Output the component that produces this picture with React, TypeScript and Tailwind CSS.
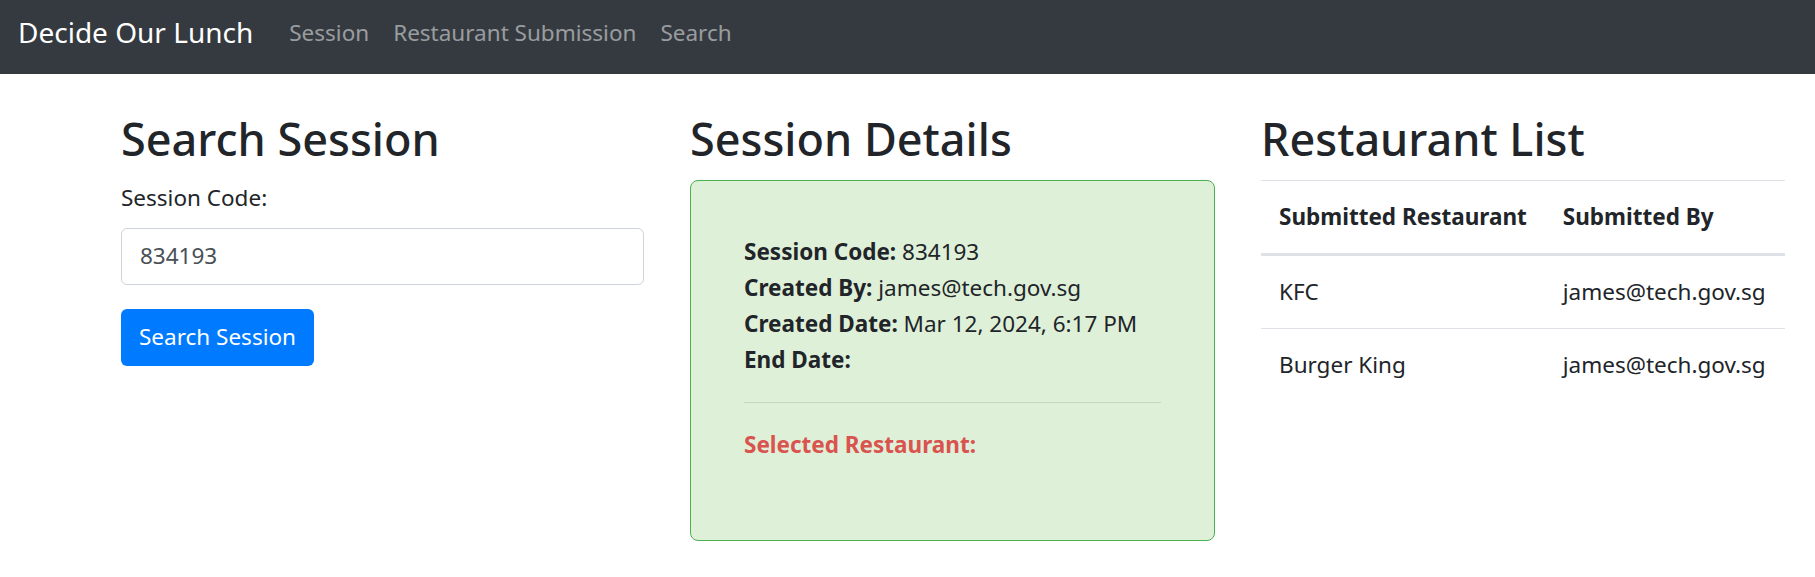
import React from 'react';

const font = { fontFamily: '"Noto Sans", "Open Sans", sans-serif' };

const navLinks = ['Session', 'Restaurant Submission', 'Search'];

const restaurants = [
  { name: 'KFC', by: 'james@tech.gov.sg' },
  { name: 'Burger King', by: 'james@tech.gov.sg' },
];

function Navbar() {
  return (
    <nav className="flex h-[74px] items-center bg-[#343a40] px-[18px] pb-[9px]">
      <span className="mr-[24px] text-[28px] leading-[45px] text-white">Decide Our Lunch</span>
      <div className="flex items-center">
        {navLinks.map((l) => (
          <a key={l} className="px-[12px] text-[22.5px] leading-[36px] text-white/50">
            {l}
          </a>
        ))}
      </div>
    </nav>
  );
}

export default function App() {
  return (
    <div className="min-h-screen bg-white text-[#212529]" style={font}>
      <Navbar />
      <main className="grid grid-cols-[523px_525px_524px] gap-x-[46px] pl-[121px] pt-[36px]">
        {/* search */}
        <section>
          <h2 className="mb-[12px] text-[45px] font-medium leading-[57.6px]">Search Session</h2>
          <label className="mb-[12px] block text-[22.5px] leading-[36px]">Session Code:</label>
          <div className="flex h-[57px] items-center rounded-[6px] border-[1.5px] border-[#ced4da] px-[18px] text-[22.5px] text-[#495057]">
            834193
          </div>
          <button className="mt-[24px] h-[57px] rounded-[6px] bg-[#007bff] px-[18px] text-[22.5px] text-white">
            Search Session
          </button>
        </section>

        {/* details */}
        <section>
          <h2 className="mb-[12px] text-[45px] font-medium leading-[57.6px]">Session Details</h2>
          <div className="rounded-[8px] border-[1.5px] border-[#4caf50] bg-[#dff0d8] p-[53px] text-[22.5px] leading-[36px]">
            <div>
              <b>Session Code:</b> 834193
            </div>
            <div>
              <b>Created By:</b> james@tech.gov.sg
            </div>
            <div className="whitespace-nowrap">
              <b>Created Date:</b> Mar 12, 2024, 6:17 PM
            </div>
            <div>
              <b>End Date:</b>
            </div>
            <hr className="my-[24px] border-t-[1.5px] border-black/10" />
            <p className="mb-[24px] font-bold text-[#d9534f]">Selected Restaurant:</p>
          </div>
        </section>

        {/* list */}
        <section>
          <h2 className="mb-[12px] text-[45px] font-medium leading-[57.6px]">Restaurant List</h2>
          <table className="w-full border-collapse text-left text-[22.5px] leading-[36px]">
            <thead>
              <tr className="border-t-[1.5px] border-b-[3px] border-[#dee2e6]">
                <th className="w-[283px] whitespace-nowrap p-[18px] font-bold">Submitted Restaurant</th>
                <th className="whitespace-nowrap p-[18px] font-bold">Submitted By</th>
              </tr>
            </thead>
            <tbody>
              {restaurants.map((r, i) => (
                <tr key={r.name} className={i === 0 ? 'border-b-[1.5px] border-[#dee2e6]' : ''}>
                  <td className="p-[18px]">{r.name}</td>
                  <td className="p-[18px]">{r.by}</td>
                </tr>
              ))}
            </tbody>
          </table>
        </section>
      </main>
    </div>
  );
}
